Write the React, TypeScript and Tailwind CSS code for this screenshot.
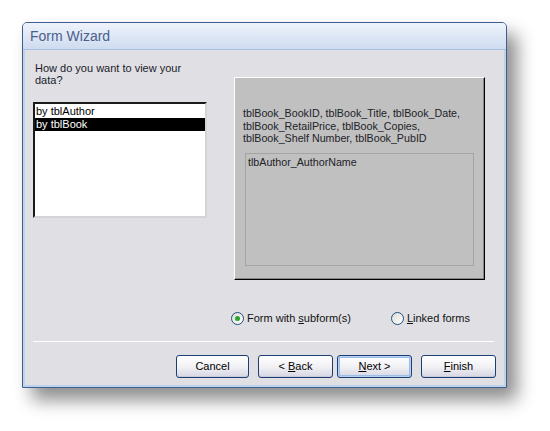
import React from "react";

const font = { fontFamily: '"Liberation Sans", Arial, sans-serif' };

function Radio({ checked }: { checked?: boolean }) {
  return (
    <span className="w-[13px] h-[13px] rounded-full border border-[#1c5180] bg-gradient-to-br from-[#dcdcd6] to-white flex items-center justify-center shrink-0">
      {checked && <span className="w-[5px] h-[5px] rounded-full bg-[#2aa52a]" />}
    </span>
  );
}

function Btn({ children, focused }: { children: React.ReactNode; focused?: boolean }) {
  return (
    <button
      className={
        "w-[75px] h-[23px] rounded-[3px] border border-[#1b3f74] bg-gradient-to-b from-white via-[#f2f2f6] to-[#d6d5e2] text-[11px] text-black flex items-center justify-center " +
        (focused ? "shadow-[inset_0_0_0_1px_#b9d0f2,inset_0_0_0_2px_#9bbbe8]" : "shadow-[inset_0_-1px_0_#c9c8d6]")
      }
    >
      {children}
    </button>
  );
}

export default function App() {
  return (
    <div className="w-[550px] h-[431px] bg-white pt-[22px] pl-[22px]" style={font}>
      {/* Window */}
      <div className="w-[485px] h-[366px] border border-[#3d5f93] rounded-t-[5px] bg-[#bfd2ec] px-[2px] pb-[2px] flex flex-col shadow-[10px_12px_18px_rgba(0,0,0,0.45)]">
        {/* Title bar */}
        <div className="h-[27px] -mx-[2px] rounded-t-[4px] bg-gradient-to-b from-[#eef3fb] to-[#cedcf0] border-b border-[#a8c0e2] flex items-center pl-[7px]">
          <span className="text-[14px] text-[#4b5f8a]">Form Wizard</span>
        </div>

        {/* Body */}
        <div className="flex-1 bg-[#e0e0e4] flex flex-col pl-[8px] pr-[8px]">
          <div className="flex">
            {/* Left column */}
            <div className="w-[174px] flex flex-col">
              <div className="mt-[12px] pl-[2px] text-[11px] leading-[12px] text-[#1a1a2a] w-[170px]">
                How do you want to view your data?
              </div>
              <div className="mt-[16px] h-[116px] bg-white border-2 border-t-[#1a1a1a] border-l-[#1a1a1a] border-b-[#d4d4d8] border-r-[#d4d4d8] pt-[1px] text-[11px] leading-[13px]">
                <div className="px-[1px]">by tblAuthor</div>
                <div className="px-[1px] bg-black text-white">by tblBook</div>
              </div>
            </div>

            {/* Preview panel */}
            <div className="ml-[27px] mt-[27px] w-[251px] h-[203px] bg-[#c0c0c0] border border-t-white border-l-white border-b-black border-r-black shadow-[inset_-1px_-1px_0_#888888] flex flex-col">
              <div className="mt-[29px] pl-[8px] text-[10.7px] leading-[12.5px] text-[#222228]">
                tblBook_BookID, tblBook_Title, tblBook_Date,
                <br />
                tblBook_RetailPrice, tblBook_Copies,
                <br />
                tblBook_Shelf Number, tblBook_PubID
              </div>
              <div className="mt-[8px] ml-[10px] w-[229px] h-[113px] border border-[#a4a4a4] pl-[2px] pt-[2px] text-[10.7px] leading-[12px] text-[#222228]">
                tlbAuthor_AuthorName
              </div>
            </div>
          </div>

          {/* Radios */}
          <div className="mt-[30px] flex items-center text-[11px] text-[#111]">
            <div className="ml-[198px] flex items-center gap-[3px]">
              <Radio checked />
              <span>
                Form with <span className="underline">s</span>ubform(s)
              </span>
            </div>
            <div className="ml-[40px] flex items-center gap-[3px]">
              <Radio />
              <span>
                <span className="underline">L</span>inked forms
              </span>
            </div>
          </div>

          {/* Separator */}
          <div className="mt-[14px] mr-[2px] h-[1px] bg-[#a0a0a4] border-b border-white" />

          {/* Buttons */}
          <div className="mt-[13px] flex pl-[143px]">
            <Btn>Cancel</Btn>
            <div className="ml-[9px]">
              <Btn>
                &lt; <span className="underline ml-[3px]">B</span>ack
              </Btn>
            </div>
            <div className="ml-[4px]">
              <Btn focused>
                <span className="underline">N</span>ext &gt;
              </Btn>
            </div>
            <div className="ml-[9px]">
              <Btn>
                <span className="underline">F</span>inish
              </Btn>
            </div>
          </div>
        </div>
      </div>
    </div>
  );
}
